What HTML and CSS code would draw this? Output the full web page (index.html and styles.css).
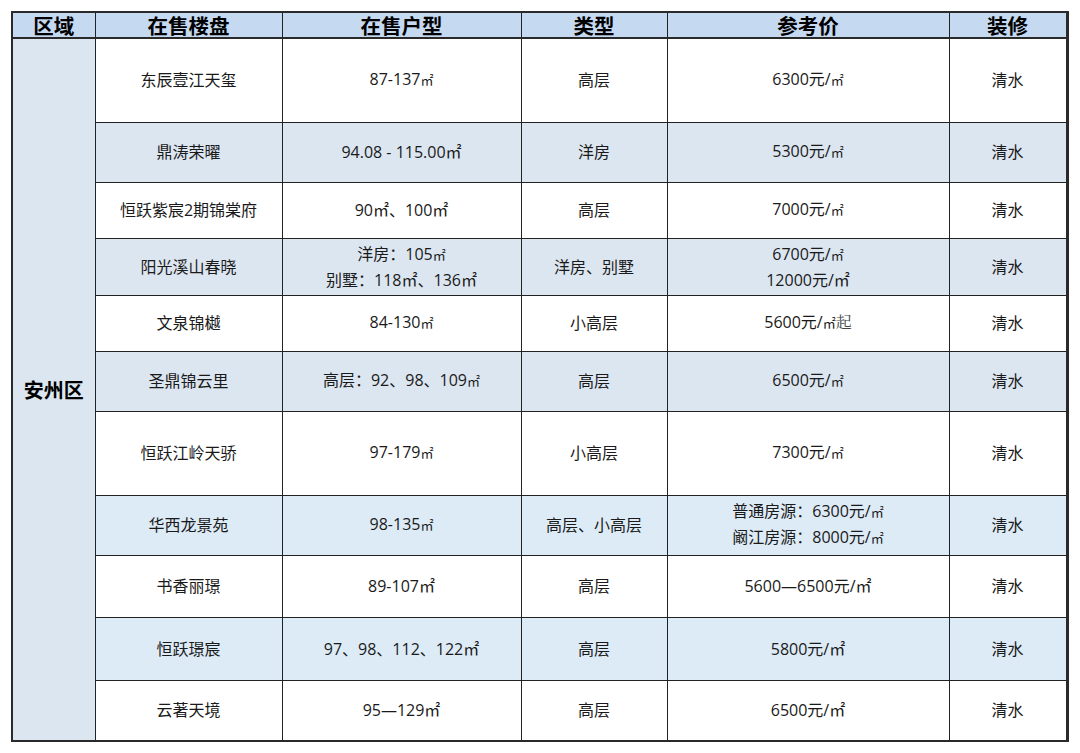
FILE: index.html
```html
<!DOCTYPE html>
<html lang="zh-CN">
<head>
<meta charset="utf-8">
<title>安州区在售楼盘</title>
<link rel="stylesheet" href="styles.css">
</head>
<body>
<table class="sheet">
  <colgroup>
    <col class="c-area"><col class="c-name"><col class="c-unit"><col class="c-type"><col class="c-price"><col class="c-deco">
  </colgroup>
  <thead>
    <tr class="head">
      <th>区域</th><th>在售楼盘</th><th>在售户型</th><th>类型</th><th>参考价</th><th>装修</th>
    </tr>
  </thead>
  <tbody>
    <tr class="r h84 white">
      <td class="area" rowspan="11">安州区</td>
      <td>东辰壹江天玺</td><td>87-137<span class="sq">㎡</span></td><td>高层</td><td>6300元/<span class="sq">㎡</span></td><td>清水</td>
    </tr>
    <tr class="r h60 gray">
      <td>鼎涛荣曜</td><td>94.08 - 115.00㎡</td><td>洋房</td><td>5300元/<span class="sq">㎡</span></td><td>清水</td>
    </tr>
    <tr class="r h56 white">
      <td>恒跃紫宸2期锦棠府</td><td>90㎡、100㎡</td><td>高层</td><td>7000元/<span class="sq">㎡</span></td><td>清水</td>
    </tr>
    <tr class="r h57 gray">
      <td>阳光溪山春晓</td><td>洋房：105<span class="sq">㎡</span><br>别墅：118㎡、136㎡</td><td>洋房、别墅</td><td>6700元/<span class="sq">㎡</span><br>12000元/㎡</td><td>清水</td>
    </tr>
    <tr class="r h56 white">
      <td>文泉锦樾</td><td>84-130<span class="sq">㎡</span></td><td>小高层</td><td>5600元/<span class="sq">㎡</span><span class="serif">起</span></td><td>清水</td>
    </tr>
    <tr class="r h60 gray">
      <td>圣鼎锦云里</td><td>高层：92、98、109<span class="sq">㎡</span></td><td>高层</td><td>6500元/<span class="sq">㎡</span></td><td>清水</td>
    </tr>
    <tr class="r h84 white">
      <td>恒跃江岭天骄</td><td>97-179<span class="sq">㎡</span></td><td>小高层</td><td>7300元/<span class="sq">㎡</span></td><td>清水</td>
    </tr>
    <tr class="r h60 blue">
      <td>华西龙景苑</td><td>98-135<span class="sq">㎡</span></td><td>高层、小高层</td><td>普通房源：6300元/<span class="sq">㎡</span><br>阚江房源：8000元/<span class="sq">㎡</span></td><td>清水</td>
    </tr>
    <tr class="r h62 white">
      <td>书香丽璟</td><td>89-107㎡</td><td>高层</td><td>5600—6500元/㎡</td><td>清水</td>
    </tr>
    <tr class="r h63 blue">
      <td>恒跃璟宸</td><td>97、98、112、122㎡</td><td>高层</td><td>5800元/㎡</td><td>清水</td>
    </tr>
    <tr class="r h61 white">
      <td>云著天境</td><td>95—129㎡</td><td>高层</td><td>6500元/㎡</td><td>清水</td>
    </tr>
  </tbody>
</table>
</body>
</html>
```

FILE: styles.css
```css
html, body {
  margin: 0;
  padding: 0;
  background: #ffffff;
}

body {
  padding: 11px 0 0 11px;
  font-family: "Open Sans", "Noto Sans CJK SC", sans-serif;
  color: #1a1a1a;
}

.sheet {
  border-collapse: collapse;
  table-layout: fixed;
  width: 1057px;
  border: 2px solid #2a2a2a;
  border-right-width: 3px;
}

.c-area { width: 83px; }
.c-name { width: 187px; }
.c-unit { width: 239px; }
.c-type { width: 146px; }
.c-price { width: 282px; }
.c-deco { width: 118px; }

.sheet th,
.sheet td {
  border: 1px solid #222;
  text-align: center;
  vertical-align: middle;
  padding: 0;
}

.head th {
  height: 24px;
  background: #c5d9f1;
  font-family: "Noto Sans CJK SC", sans-serif;
  font-weight: 700;
  font-size: 20.5px;
  line-height: 24px;
  color: #000;
  border-bottom: 2px solid #2a2a2a;
}

.sheet td {
  font-size: 16px;
  line-height: 24px;
}

.sheet .area {
  background: #dce6f1;
  font-family: "Noto Sans CJK SC", sans-serif;
  font-weight: 700;
  font-size: 20px;
  color: #000;
}

.white td { background: #ffffff; }
.gray td { background: #dce6f1; }
.blue td { background: #ddebf7; }
.sheet tr td.area { background: #dce6f1; }

.h84 { height: 84px; }
.h63 { height: 63px; }
.h62 { height: 62px; }
.h61 { height: 61px; }
.h60 { height: 60px; }
.h57 { height: 57px; }
.h56 { height: 56px; }

.sq {
  font-family: "Liberation Serif", "Noto Sans CJK SC", serif;
  font-size: 13px;
}

.serif {
  font-family: "Noto Serif CJK SC", "Noto Sans CJK SC", serif;
  color: #444;
}
```
